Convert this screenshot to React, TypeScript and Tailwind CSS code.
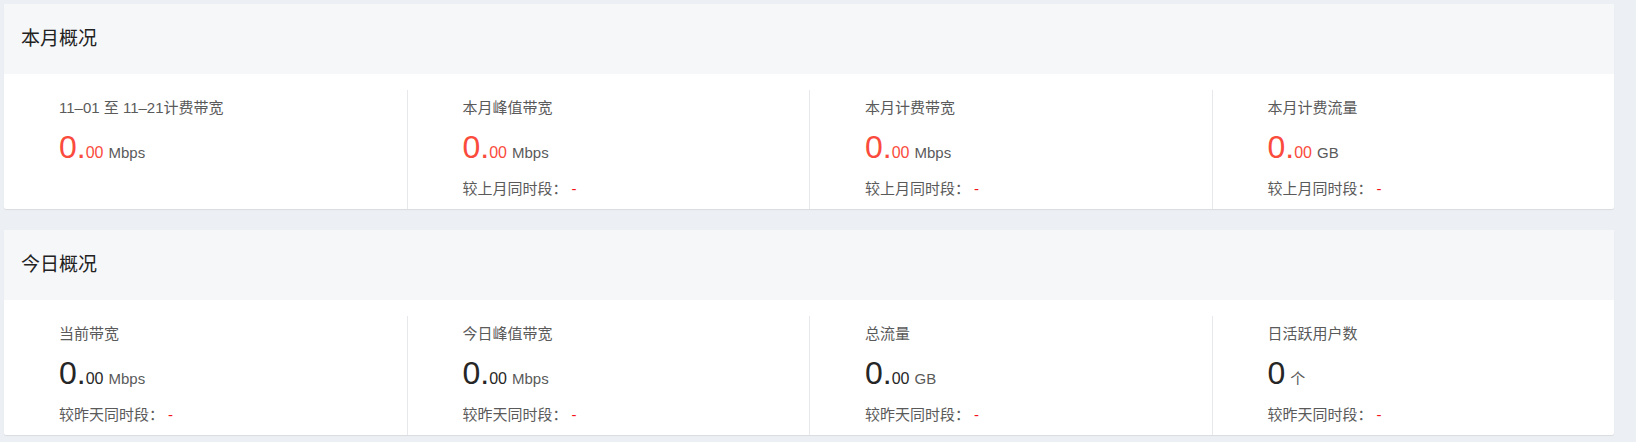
import React from 'react';

interface Stat {
  label: string;
  int: string;
  dec?: string;
  unit: string;
  compare?: string;
}

interface SectionProps {
  title: string;
  highlight: boolean;
  stats: Stat[];
}

const monthStats: Stat[] = [
  { label: '11–01 至 11–21计费带宽', int: '0.', dec: '00', unit: 'Mbps' },
  { label: '本月峰值带宽', int: '0.', dec: '00', unit: 'Mbps', compare: '较上月同时段：' },
  { label: '本月计费带宽', int: '0.', dec: '00', unit: 'Mbps', compare: '较上月同时段：' },
  { label: '本月计费流量', int: '0.', dec: '00', unit: 'GB', compare: '较上月同时段：' },
];

const todayStats: Stat[] = [
  { label: '当前带宽', int: '0.', dec: '00', unit: 'Mbps', compare: '较昨天同时段：' },
  { label: '今日峰值带宽', int: '0.', dec: '00', unit: 'Mbps', compare: '较昨天同时段：' },
  { label: '总流量', int: '0.', dec: '00', unit: 'GB', compare: '较昨天同时段：' },
  { label: '日活跃用户数', int: '0', unit: '个', compare: '较昨天同时段：' },
];

const Section: React.FC<SectionProps> = ({ title, highlight, stats }) => {
  return (
    <div className="bg-white rounded-[2px] shadow-[0_1px_1px_rgba(0,0,0,0.08)] overflow-hidden">
      <div className="h-[70px] bg-[#f6f7f9] flex items-center pl-[17px] text-[19px] text-[#222]">
        {title}
      </div>
      <div className="grid grid-cols-4 pt-4">
        {stats.map((s, i) => (
          <div
            key={s.label}
            className={`h-[119px] pl-[55px] pt-[7px] ${i > 0 ? 'border-l border-[#e6e8eb]' : ''}`}
          >
            <div className="text-[15px] leading-[22px] text-[#5a5a5a]">{s.label}</div>
            <div className={`mt-2 h-10 leading-10 whitespace-nowrap ${highlight ? 'text-[#fa4b3c]' : 'text-[#262626]'}`}>
              <span className="text-[32px]">{s.int}</span>
              {s.dec && <span className="text-[16px]">{s.dec}</span>}
              <span className="text-[15px] text-[#5a5a5a] ml-[5px]">{s.unit}</span>
            </div>
            {s.compare && (
              <div className="mt-[11px] text-[15px] leading-[22px] text-[#5a5a5a]">
                {s.compare}
                <span className="text-[#f5121d] ml-[4px]">-</span>
              </div>
            )}
          </div>
        ))}
      </div>
    </div>
  );
};

export default function App() {
  return (
    <div
      className="w-[1636px] h-[442px] bg-[#eceff3] pt-1 pl-1 pr-[22px] flex flex-col gap-[21px]"
      style={{ fontFamily: '"Liberation Sans", "Noto Sans CJK SC", sans-serif' }}
    >
      <Section title="本月概况" highlight={true} stats={monthStats} />
      <Section title="今日概况" highlight={false} stats={todayStats} />
    </div>
  );
}
